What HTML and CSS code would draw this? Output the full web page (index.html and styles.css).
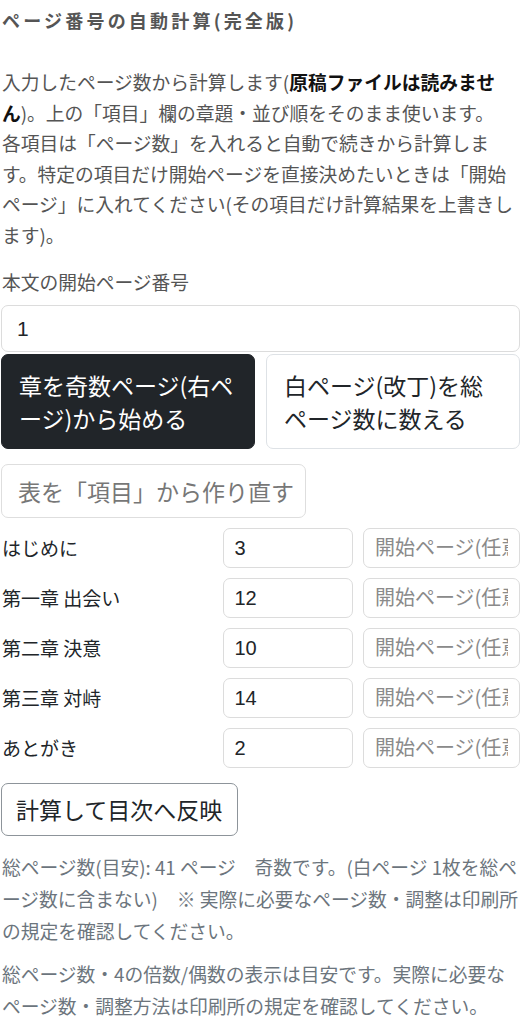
FILE: index.html
```html
<!DOCTYPE html>
<html lang="ja">
<head>
<meta charset="utf-8">
<title>ページ番号の自動計算</title>
<link rel="stylesheet" href="styles.css">
</head>
<body>
<main class="page">
  <h2 class="title">ページ番号の自動計算(完全版)</h2>
  <p class="lead">入力したページ数から計算します(<strong>原稿ファイルは読みません</strong>)。上の「項目」欄の章題・並び順をそのまま使います。<br>各項目は「ページ数」を入れると自動で続きから計算します。特定の項目だけ開始ページを直接決めたいときは「開始ページ」に入れてください(その項目だけ計算結果を上書きします)。</p>
  <label class="field-label" for="start">本文の開始ページ番号</label>
  <input class="input input-main" id="start" type="text" value="1">
  <div class="toggles">
    <button class="btn btn-lg btn-dark" type="button">章を奇数ページ(右ページ)から始める</button>
    <button class="btn btn-lg btn-light" type="button">白ページ(改丁)を総ページ数に数える</button>
  </div>
  <button class="btn btn-lg btn-muted rebuild" type="button">表を「項目」から作り直す</button>
  <div class="rows">
    <span class="row-label">はじめに</span>
    <input class="input input-row" type="text" value="3">
    <input class="input input-row" type="text" placeholder="開始ページ(任意)">
    <span class="row-label">第一章 出会い</span>
    <input class="input input-row" type="text" value="12">
    <input class="input input-row" type="text" placeholder="開始ページ(任意)">
    <span class="row-label">第二章 決意</span>
    <input class="input input-row" type="text" value="10">
    <input class="input input-row" type="text" placeholder="開始ページ(任意)">
    <span class="row-label">第三章 対峙</span>
    <input class="input input-row" type="text" value="14">
    <input class="input input-row" type="text" placeholder="開始ページ(任意)">
    <span class="row-label">あとがき</span>
    <input class="input input-row" type="text" value="2">
    <input class="input input-row" type="text" placeholder="開始ページ(任意)">
  </div>
  <button class="btn btn-lg btn-outline calc" type="button">計算して目次へ反映</button>
  <p class="note">総ページ数(目安): 41 ページ　奇数です。(白ページ 1枚を総ページ数に含まない)　※ 実際に必要なページ数・調整は印刷所の規定を確認してください。</p>
  <p class="note note-last">総ページ数・4の倍数/偶数の表示は目安です。実際に必要なページ数・調整方法は印刷所の規定を確認してください。</p>
</main>
</body>
</html>
```
FILE: styles.css
```css
* { box-sizing: border-box; }
html, body { margin: 0; padding: 0; background: #fff; }
body {
  font-family: "Noto Sans CJK JP", "Noto Sans", sans-serif;
  font-size: 18.75px;
  color: #212529;
  overflow: hidden;
}
.page {
  width: 519px;
  margin-left: 1px;
  display: flex;
  flex-direction: column;
  align-items: flex-start;
}
.title {
  margin: 7px 0 0 1px;
  font-size: 18px;
  line-height: 27px;
  font-weight: 700;
  letter-spacing: 3.2px;
  color: #555;
}
.lead {
  margin: 33px 0 0 1px;
  line-height: 30.5px;
  color: #555;
}
.lead strong { color: #111; font-weight: 700; }
.field-label {
  margin: 18px 0 0 1px;
  line-height: 28px;
  color: #555;
}
.input {
  font-family: "Liberation Sans", "Noto Sans CJK JP", sans-serif;
  color: #212529;
  background: #fff;
  border: 1px solid #dcdcdc;
  border-radius: 7px;
  outline: none;
  margin: 0;
}
.input::placeholder {
  font-family: "Noto Sans CJK JP", sans-serif;
  color: #8a8a8a;
}
.input-main {
  width: 100%;
  height: 47px;
  margin-top: 9px;
  padding: 0 15px;
  font-size: 21px;
}
.toggles {
  width: 100%;
  margin-top: 2px;
  display: grid;
  grid-template-columns: 1fr 1fr;
  column-gap: 11px;
}
.btn {
  font-family: "Noto Sans CJK JP", sans-serif;
  margin: 0;
  cursor: pointer;
  text-align: left;
}
.btn-lg {
  font-size: 23px;
  line-height: 33px;
  border-radius: 7px;
  padding: 9px 14px 10px;
}
.toggles .btn-lg {
  height: 95px;
  padding: 0 16px 0 17px;
}
.btn-dark {
  background: #212529;
  color: #fff;
  border: 1px solid #212529;
}
.btn-light {
  background: #fff;
  color: #212529;
  border: 1px solid #dee2e6;
}
.btn-muted {
  background: #fff;
  color: #777;
  border: 1px solid #dedede;
}
.rebuild {
  margin-top: 15px;
  height: 54px;
  width: 305px;
  padding: 0 8px 0 16px;
  white-space: nowrap;
}
.rows {
  width: 100%;
  margin-top: 10px;
  display: grid;
  grid-template-columns: 211px 130px 1fr;
  column-gap: 10.5px;
  row-gap: 10px;
  align-items: center;
}
.row-label {
  padding-left: 1px;
  line-height: 28px;
  font-size: 19px;
  color: #212529;
}
.input-row {
  width: 100%;
  height: 40px;
  padding: 0 11px;
  font-size: 20px;
}
.btn-outline {
  background: #fff;
  color: #212529;
  border: 1px solid #8d949a;
}
.calc {
  margin-top: 15px;
  width: 237px;
  height: 53px;
  padding: 0 8px 0 14px;
  white-space: nowrap;
}
.note {
  margin: 15px 0 0 1px;
  line-height: 32px;
  color: #6c757d;
}
.note-last { margin-top: 11px; }
```
